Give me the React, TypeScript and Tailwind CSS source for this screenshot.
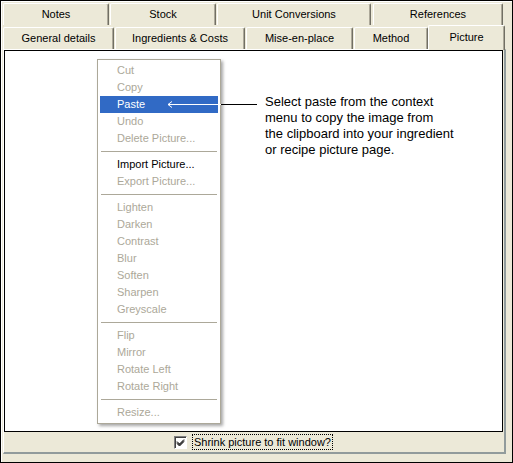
import React from 'react';

type MenuEntry = { label?: string; enabled?: boolean; active?: boolean; sep?: boolean };

const menu: MenuEntry[] = [
  { label: 'Cut' },
  { label: 'Copy' },
  { label: 'Paste', active: true },
  { label: 'Undo' },
  { label: 'Delete Picture...' },
  { sep: true },
  { label: 'Import Picture...', enabled: true },
  { label: 'Export Picture...' },
  { sep: true },
  { label: 'Lighten' },
  { label: 'Darken' },
  { label: 'Contrast' },
  { label: 'Blur' },
  { label: 'Soften' },
  { label: 'Sharpen' },
  { label: 'Greyscale' },
  { sep: true },
  { label: 'Flip' },
  { label: 'Mirror' },
  { label: 'Rotate Left' },
  { label: 'Rotate Right' },
  { sep: true },
  { label: 'Resize...' },
];

// back row of tabs
function Tab({ label, width, gap }: { label: string; width: string; gap: string }) {
  return (
    <div
      className={`${width} ${gap} h-[22px] flex items-center justify-center border-t border-l border-white border-r border-r-[#716F64] shadow-[inset_-1px_0_0_#ACA899] bg-[#ECE9D8] rounded-tl-[2px] rounded-tr-[2px]`}
    >
      {label}
    </div>
  );
}

export default function App() {
  return (
    <div className="relative w-[513px] h-[463px] border border-black bg-[#ECE9D8] text-[11px] text-black font-['Liberation_Sans',Arial,sans-serif] overflow-hidden">
      <div className="h-full border-t border-l border-white pl-[1px] pt-[1px]">
        {/* Tab rows */}
        <div className="flex">
          <Tab label="Notes" width="w-[106px]" gap="ml-0" />
          <Tab label="Stock" width="w-[106px]" gap="ml-[1px]" />
          <Tab label="Unit Conversions" width="w-[154px]" gap="ml-[1px]" />
          <Tab label="References" width="w-[130px]" gap="ml-[2px]" />
        </div>
        <div className="flex items-start h-[24px]">
          <div className="mt-[2px] flex">
            <Tab label="General details" width="w-[111px]" gap="ml-0" />
            <Tab label="Ingredients & Costs" width="w-[130px]" gap="ml-[1px]" />
            <Tab label="Mise-en-place" width="w-[107px]" gap="ml-[1px]" />
            <Tab label="Method" width="w-[74px]" gap="ml-[1px]" />
          </div>
          {/* selected tab */}
          <div className="relative z-10 w-[77px] h-[25px] flex justify-center pt-[3px] border-t border-l border-white border-r border-r-[#716F64] shadow-[inset_-1px_0_0_#ACA899] bg-[#ECE9D8] rounded-tl-[2px] rounded-tr-[2px]">
            Picture
          </div>
        </div>

        {/* Tab panel */}
        <div className="w-[503px] border-t border-l border-white border-r-2 border-r-[#919B9C] border-b-2 border-b-[#919B9C]">
          <div className="w-[499px] h-[382px] bg-white border border-black" />
          <div className="h-[20px] flex items-center pl-[170px]">
            <div className="w-[13px] h-[13px] bg-white border-t border-l border-[#808080] border-r border-b border-r-white border-b-white shadow-[inset_1px_1px_0_#404040] flex items-center justify-center">
              <svg width="9" height="9" viewBox="0 0 9 9">
                <path d="M1 3.5 L3.5 6 L8 1.5 M1 4.5 L3.5 7 L8 2.5 M1 5.5 L3.5 8 L8 3.5" stroke="#000" strokeWidth="1" fill="none" />
              </svg>
            </div>
            <div className="ml-[5px] h-[16px] px-[1px] flex items-center border border-dotted border-black leading-none">
              Shrink picture to fit window?
            </div>
          </div>
        </div>
      </div>

      {/* Context menu */}
      <div className="absolute left-[96px] top-[58px] w-[124px] bg-white border border-[#ACA899] p-[2px] shadow-[2px_2px_3px_rgba(0,0,0,0.35)]">
        {menu.map((m, i) =>
          m.sep ? (
            <div key={i} className="h-[9px] flex items-center px-[1px]">
              <div className="h-px w-full bg-[#ACA899]" />
            </div>
          ) : (
            <div
              key={i}
              className={`h-[17px] flex items-center pl-[17px] ${m.active ? 'bg-[#316AC5] text-white' : m.enabled ? 'text-black' : 'text-[#ACA899]'}`}
            >
              {m.label}
            </div>
          )
        )}
      </div>

      {/* Pointer arrow */}
      <svg className="absolute left-[164px] top-[98px]" width="96" height="12" viewBox="0 0 96 12">
        <line x1="3" y1="5.5" x2="56" y2="5.5" stroke="#fff" strokeWidth="1" />
        <polyline points="7,2.5 3,5.5 7,8.5" stroke="#fff" strokeWidth="1" fill="none" />
        <line x1="56" y1="5.5" x2="92" y2="5.5" stroke="#000" strokeWidth="1" />
      </svg>

      {/* Explanation */}
      <div className="absolute left-[264px] top-[93px] text-[13px] leading-[16px] text-black">
        Select paste from the context
        <br />
        menu to copy the image from
        <br />
        the clipboard into your ingredient
        <br />
        or recipe picture page.
      </div>
    </div>
  );
}
